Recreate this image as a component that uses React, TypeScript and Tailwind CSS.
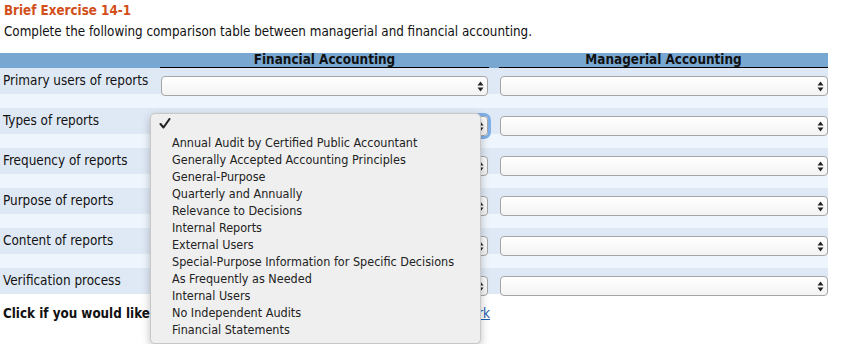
import React from "react";

const rows = [
  "Primary users of reports",
  "Types of reports",
  "Frequency of reports",
  "Purpose of reports",
  "Content of reports",
  "Verification process",
];

const options = [
  "Annual Audit by Certified Public Accountant",
  "Generally Accepted Accounting Principles",
  "General-Purpose",
  "Quarterly and Annually",
  "Relevance to Decisions",
  "Internal Reports",
  "External Users",
  "Special-Purpose Information for Specific Decisions",
  "As Frequently as Needed",
  "Internal Users",
  "No Independent Audits",
  "Financial Statements",
];

function Arrows() {
  return (
    <svg width="7" height="11" viewBox="0 0 7 11" className="shrink-0">
      <path d="M3.5 0.5 L6.5 4.5 L0.5 4.5 Z" fill="#222" />
      <path d="M3.5 10.5 L6.5 6.5 L0.5 6.5 Z" fill="#222" />
    </svg>
  );
}

function FakeSelect({ focused, w }: { focused?: boolean; w: string }) {
  return (
    <div
      className={
        "h-[20px] rounded-[4px] border border-[#a6a6a6] bg-gradient-to-b from-white to-[#f3f3f3] flex items-center justify-end pr-[3px] " +
        w +
        (focused ? " shadow-[0_0_0_3px_#7fb0ea]" : "")
      }
    >
      <Arrows />
    </div>
  );
}

export default function App() {
  const font = { fontFamily: '"DejaVu Sans Condensed", "DejaVu Sans", sans-serif' };
  return (
    <div className="relative w-[849px] h-[344px] bg-white text-[13.3px] text-[#111]" style={font}>
      <div className="pl-[4px] pt-[3px]">
        <div className="font-bold text-[13.3px] text-[#d24f1a] leading-[16px]">Brief Exercise 14-1</div>
        <div className="mt-[5px] leading-[16px] text-[13.3px]">
          Complete the following comparison table between managerial and financial accounting.
        </div>
      </div>

      <div className="mt-[13px] w-[828px]">
        <div className="grid grid-cols-[160px_329px_10px_329px] h-[15px] bg-[#78a8d2]">
          <div />
          <div className="border-b border-black text-center font-bold leading-[14px] text-[13.4px]">Financial Accounting</div>
          <div />
          <div className="border-b border-black text-center font-bold leading-[14px] text-[13.4px]">Managerial Accounting</div>
        </div>
        {rows.map((r, i) => (
          <div key={r}>
            <div className="grid grid-cols-[160px_329px_10px_329px] h-[26px] bg-[#dfe9f5]">
              <div className="pl-[3px] pt-[5px] leading-[16px] text-[13.4px] whitespace-nowrap">{r}</div>
              <div className="pt-[8px] pl-[1px]">
                <FakeSelect w="w-[327px]" focused={i === 1} />
              </div>
              <div />
              <div className="pt-[8px] pl-[1px]">
                <FakeSelect w="w-[328px]" />
              </div>
            </div>
            {i < rows.length - 1 && <div className="h-[14px] bg-[#eef5fc]" />}
          </div>
        ))}
      </div>

      <div className="mt-[12px] pl-[3px] w-[490px] flex justify-between text-[13.3px] leading-[16px] whitespace-nowrap">
        <span className="font-bold">Click if you would like to Show Work:</span>
        <a className="text-[#1a5db0] underline">Open Show Work</a>
      </div>

      <div className="absolute left-[150px] top-[113px] w-[331px] h-[231px] rounded-[5px] bg-[#efefef] border border-[#c8c8c8] shadow-[0_3px_8px_rgba(0,0,0,0.25)] pt-[1px] text-[12.5px] text-[#222]">
        <div className="h-[17px] pl-[8px] flex items-center">
          <svg width="12" height="11" viewBox="0 0 12 11">
            <path d="M1.5 6 L4.5 9.5 L10.5 1" fill="none" stroke="#222" strokeWidth="2.1" strokeLinecap="round" strokeLinejoin="round" />
          </svg>
        </div>
        <div className="h-[2px]" />
        {options.map((o) => (
          <div key={o} className="h-[17px] pl-[21px] leading-[17px] whitespace-nowrap">
            {o}
          </div>
        ))}
      </div>
    </div>
  );
}
